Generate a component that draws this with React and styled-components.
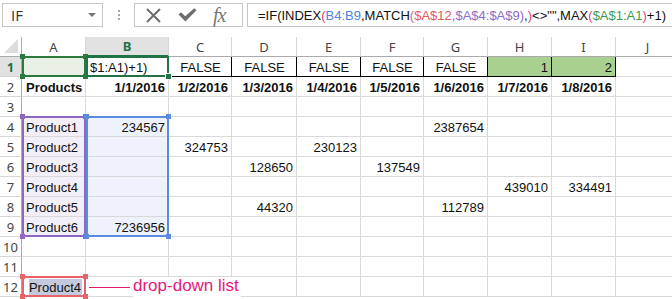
import React from "react";
import styled, { createGlobalStyle } from "styled-components";

const GlobalStyle = createGlobalStyle`
  html, body {
    margin: 0;
    padding: 0;
    background: #fff;
  }
  body {
    width: 672px;
    height: 299px;
    overflow: hidden;
  }
`;

const Window = styled.div`
  width: 672px;
  height: 299px;
  overflow: hidden;
  background: #fff;
  font-family: "Liberation Sans", Arial, sans-serif;
`;

/* ---------- formula bar ---------- */

const FormulaBar = styled.div`
  display: flex;
  align-items: flex-start;
  height: 37px;
  box-sizing: border-box;
  padding: 3px 0 0 2px;
`;

const NameBox = styled.div`
  width: 101px;
  height: 24px;
  box-sizing: border-box;
  border: 1px solid #c6c6c6;
  display: flex;
  align-items: center;
  justify-content: space-between;
  padding: 0 6px 0 8px;
  font: 15px "Open Sans", sans-serif;
  color: #333;
`;

const Caret = styled.span`
  width: 0;
  height: 0;
  border-left: 4px solid transparent;
  border-right: 4px solid transparent;
  border-top: 4px solid #777;
`;

const Grip = styled.div`
  width: 31px;
  height: 24px;
  display: flex;
  flex-direction: column;
  align-items: center;
  justify-content: center;
  gap: 2px;

  span {
    width: 2px;
    height: 2px;
    background: #a6a6a6;
  }
`;

const ButtonGroup = styled.div`
  width: 109px;
  height: 24px;
  box-sizing: border-box;
  border: 1px solid #c6c6c6;
  display: flex;
  align-items: center;
  padding-left: 11px;
  gap: 17px;
  color: #6e6e6e;
`;

const Fx = styled.span`
  font: italic 20px "Liberation Serif", serif;
  color: #777;
  margin-left: -1px;
  letter-spacing: -1px;
  line-height: 1;
`;

const FormulaInput = styled.div`
  flex: 1;
  margin-left: 4px;
  height: 24px;
  box-sizing: border-box;
  border: 1px solid #c6c6c6;
  border-right: none;
  display: flex;
  align-items: center;
  padding-left: 10px;
  white-space: nowrap;
  overflow: hidden;
  font-size: 13px;
  color: #111;
`;

const Ref = styled.span`
  color: ${(p) => p.$color || "inherit"};
`;

/* ---------- grid ---------- */

const Sheet = styled.div`
  display: grid;
  grid-template-columns: 22px 64px 83px 63px 65px 64px 63px 64px 64px 64px 64px;
  grid-template-rows: repeat(13, 20px);
  width: 680px;
`;

const Corner = styled.div`
  grid-row: 1;
  grid-column: 1;
  box-sizing: border-box;
  border-right: 1px solid #ababab;
  border-bottom: 1px solid #ababab;
  display: flex;
  align-items: flex-end;
  justify-content: flex-end;
  padding: 0 3px 3px 0;

  &::after {
    content: "";
    width: 0;
    height: 0;
    border-left: 14px solid transparent;
    border-bottom: 14px solid #dcdcdc;
  }
`;

const ColHeader = styled.div`
  grid-row: 1;
  grid-column: ${(p) => p.$col};
  box-sizing: border-box;
  border-right: 1px solid #d5d5d5;
  border-bottom: ${(p) => (p.$active ? "2px solid #217346" : "1px solid #ababab")};
  background: ${(p) => (p.$active ? "#e1e1e1" : "#fff")};
  color: ${(p) => (p.$active ? "#217346" : "#444")};
  font: ${(p) => (p.$active ? 700 : 400)} 13px "Noto Sans", sans-serif;
  display: flex;
  align-items: center;
  justify-content: center;
`;

const RowHeader = styled.div`
  grid-column: 1;
  grid-row: ${(p) => p.$row};
  box-sizing: border-box;
  border-right: 1px solid #ababab;
  border-bottom: 1px solid #d5d5d5;
  background: ${(p) => (p.$active ? "#e1e1e1" : "#fff")};
  color: ${(p) => (p.$active ? "#217346" : "#444")};
  font: ${(p) => (p.$active ? 700 : 400)} 13px "Noto Sans", sans-serif;
  display: flex;
  align-items: center;
  justify-content: center;
`;

const Cell = styled.div`
  grid-column: ${(p) => p.$col};
  grid-row: ${(p) => p.$row};
  box-sizing: border-box;
  border-right: 1px solid ${(p) => (p.$boxed ? "#000" : "#d9d9d9")};
  border-bottom: 1px solid ${(p) => (p.$boxed ? "#000" : "#d9d9d9")};
  background: ${(p) => p.$fill || "#fff"};
  display: flex;
  align-items: center;
  justify-content: ${(p) =>
    p.$align === "left" ? "flex-start" : p.$align === "center" ? "center" : "flex-end"};
  padding: 1px 3px 0 4px;
  font-size: 13px;
  font-weight: ${(p) => (p.$bold ? 700 : 400)};
  color: #111;
  white-space: nowrap;
  overflow: hidden;
`;

const Selected = styled.span`
  background: #c4cadd;
  padding: 1px 1px 1px 0;
`;

const RangeBox = styled.div`
  grid-column: ${(p) => p.$cols};
  grid-row: ${(p) => p.$rows};
  position: relative;
  box-sizing: border-box;
  margin: -1px 0 0 0;
  border: 2px solid ${(p) => p.$color};
  pointer-events: none;
  z-index: 2;
`;

const Handle = styled.span`
  position: absolute;
  width: 5px;
  height: 5px;
  background: ${(p) => p.$color};
  ${(p) => (p.$v === "top" ? "top: -4px;" : "bottom: -4px;")}
  ${(p) => (p.$h === "left" ? "left: -4px;" : "right: -4px;")}
  outline: ${(p) => (p.$ring ? "1px solid #fff" : "none")};
`;

const Callout = styled.div`
  grid-column: 3 / 12;
  grid-row: 13;
  display: flex;
  align-items: center;
  z-index: 3;
  pointer-events: none;
`;

const Leader = styled.span`
  width: 41px;
  height: 1px;
  margin-left: 3px;
  background: #e6176f;
`;

const CalloutLabel = styled.span`
  margin-left: 3px;
  padding: 0 2px 2px 0;
  background: #fff;
  color: #e6197a;
  font-size: 17px;
  line-height: 18px;
`;

/* ---------- data ---------- */

const COLS = ["A", "B", "C", "D", "E", "F", "G", "H", "I", "J"];

const txt = (v, extra = {}) => ({ v, align: "left", ...extra });
const num = (v, extra = {}) => ({ v, align: "right", ...extra });

const PURPLE_FILL = "#f2eff8";
const BLUE_FILL = "#eef2fb";

const DATA = {
  1: {
    A: { v: "", fill: "#e9f1e7" },
    B: txt("$1:A1)+1)"),
    C: { v: "FALSE", align: "center", boxed: true },
    D: { v: "FALSE", align: "center", boxed: true },
    E: { v: "FALSE", align: "center", boxed: true },
    F: { v: "FALSE", align: "center", boxed: true },
    G: { v: "FALSE", align: "center", boxed: true },
    H: num("1", { fill: "#a9d08e", boxed: true }),
    I: num("2", { fill: "#a9d08e", boxed: true }),
  },
  2: {
    A: txt("Products", { bold: true }),
    B: num("1/1/2016", { bold: true }),
    C: num("1/2/2016", { bold: true }),
    D: num("1/3/2016", { bold: true }),
    E: num("1/4/2016", { bold: true }),
    F: num("1/5/2016", { bold: true }),
    G: num("1/6/2016", { bold: true }),
    H: num("1/7/2016", { bold: true }),
    I: num("1/8/2016", { bold: true }),
  },
  4: { B: num("234567"), G: num("2387654") },
  5: { C: num("324753"), E: num("230123") },
  6: { D: num("128650"), F: num("137549") },
  7: { H: num("439010"), I: num("334491") },
  8: { D: num("44320"), G: num("112789") },
  9: { B: num("7236956") },
};

for (let r = 4; r <= 9; r++) {
  DATA[r].A = txt(`Product${r - 3}`, { fill: PURPLE_FILL });
  DATA[r].B = { ...(DATA[r].B || { v: "" }), fill: BLUE_FILL };
}

const FORMULA = [
  ["=IF(INDEX"],
  ["(", "#e0457b"],
  ["B4:B9", "#4f7fdc"],
  [",MATCH"],
  ["(", "#b768b8"],
  ["$A$12", "#e35a5e"],
  [",", "#8e6bc7"],
  ["$A$4:$A$9", "#8e6bc7"],
  [")", "#8e6bc7"],
  [","],
  [")", "#e0457b"],
  ['<>"",MAX'],
  ["(", "#e0457b"],
  ["$A$1:A1", "#3e9c52"],
  [")", "#e0457b"],
  ["+1)"],
];

const CORNERS = [
  ["top", "left"],
  ["top", "right"],
  ["bottom", "left"],
  ["bottom", "right"],
];

function Range({ cols, rows, color, handles = CORNERS, ring }) {
  return (
    <RangeBox $cols={cols} $rows={rows} $color={color}>
      {handles.map(([v, h]) => (
        <Handle key={v + h} $v={v} $h={h} $color={color} $ring={ring} />
      ))}
    </RangeBox>
  );
}

function CancelIcon() {
  return (
    <svg width="15" height="15" viewBox="0 0 15 15">
      <path d="M1 1 L14 14 M14 1 L1 14" stroke="currentColor" strokeWidth="2" fill="none" />
    </svg>
  );
}

function EnterIcon() {
  return (
    <svg width="19" height="14" viewBox="0 0 19 14">
      <path d="M0.5 6.5 L3 4.2 L7.2 8.2 L16.3 0.3 L18.5 2.3 L7.4 13.6 Z" fill="currentColor" />
    </svg>
  );
}

export default function App() {
  const rows = Array.from({ length: 12 }, (_, i) => i + 1);

  return (
    <Window>
      <GlobalStyle />
      <FormulaBar>
        <NameBox>
          IF
          <Caret />
        </NameBox>
        <Grip>
          <span />
          <span />
          <span />
        </Grip>
        <ButtonGroup>
          <CancelIcon />
          <EnterIcon />
          <Fx>fx</Fx>
        </ButtonGroup>
        <FormulaInput>
          {FORMULA.map(([t, c], i) => (
            <Ref key={i} $color={c}>
              {t}
            </Ref>
          ))}
        </FormulaInput>
      </FormulaBar>

      <Sheet>
        <Corner />
        {COLS.map((c, i) => (
          <ColHeader key={c} $col={i + 2} $active={c === "B"}>
            {c}
          </ColHeader>
        ))}

        {rows.map((r) => (
          <React.Fragment key={r}>
            <RowHeader $row={r + 1} $active={r === 1}>
              {r}
            </RowHeader>
            {COLS.map((c, i) => {
              const d = (DATA[r] && DATA[r][c]) || { v: "" };
              return (
                <Cell
                  key={c}
                  $col={i + 2}
                  $row={r + 1}
                  $align={d.align}
                  $bold={d.bold}
                  $fill={d.fill}
                  $boxed={d.boxed}
                >
                  {r === 12 && c === "A" ? <Selected>Product4</Selected> : d.v}
                </Cell>
              );
            })}
          </React.Fragment>
        ))}

        <Range cols="2 / 3" rows="2 / 3" color="#2a7a40" />
        <Range cols="3 / 4" rows="2 / 3" color="#217346" handles={[["bottom", "right"]]} ring />
        <Range cols="2 / 3" rows="5 / 11" color="#8e67c2" />
        <Range cols="3 / 4" rows="5 / 11" color="#5b8ae2" />
        <Range cols="2 / 3" rows="13 / 14" color="#e8626a" />

        <Callout>
          <Leader />
          <CalloutLabel>drop-down list</CalloutLabel>
        </Callout>
      </Sheet>
    </Window>
  );
}
